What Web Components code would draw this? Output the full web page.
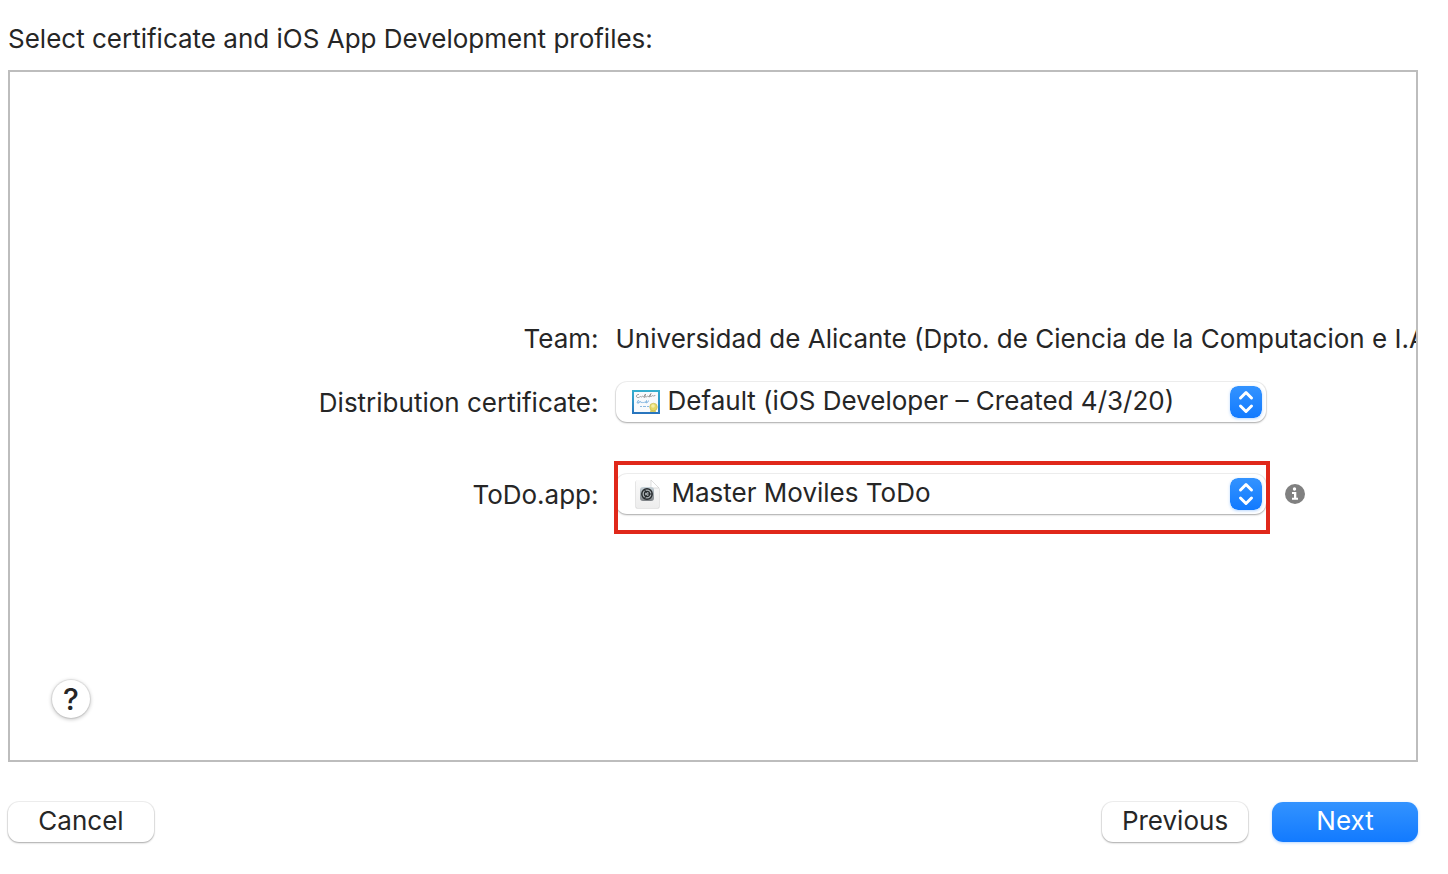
<!DOCTYPE html>
<html lang="en">
<head>
<meta charset="utf-8">
<title>Select certificate and profiles</title>
<style>
  body { margin: 0; background: #fff; color: #262626; font: 26px/32px Inter, "Liberation Sans", sans-serif; }
</style>
</head>
<body>
<signing-sheet>
  <team-row label="Team:">Universidad de Alicante (Dpto. de Ciencia de la Computacion e I.A.</team-row>
  <popup-row label="Distribution certificate:" value="Default (iOS Developer – Created 4/3/20)" icon="certificate"></popup-row>
  <popup-row label="ToDo.app:" value="Master Moviles ToDo" icon="profile" marked info></popup-row>
  <help-button slot="help"></help-button>
  <push-button slot="cancel">Cancel</push-button>
  <push-button slot="actions">Previous</push-button>
  <push-button slot="actions" primary>Next</push-button>
</signing-sheet>

<script>
const rowStyle = `
  :host { display: grid; grid-template-columns: 42% minmax(0, 1fr); column-gap: 15px; align-items: center; }
  .label { text-align: right; padding-right: 2px; white-space: nowrap; }
`;

class SigningSheet extends HTMLElement {
  constructor() {
    super();
    this.attachShadow({ mode: "open" }).innerHTML = `
      <style>
        :host { display: flex; flex-direction: column; box-sizing: border-box; min-height: 100vh; padding: 23px 30px 32px 8px; }
        h1 { margin: 0 0 15px; font: inherit; }
        .panel { flex: 1; display: flex; flex-direction: column; border: 2px solid #bdbdbd; overflow: hidden; }
        .rows { flex: 1; display: flex; flex-direction: column; justify-content: center; padding-top: 85px; }
        .help { padding: 0 0 42px 42px; }
        footer { display: flex; justify-content: space-between; margin-top: 40px; }
        .actions { display: flex; gap: 24px; }
      </style>
      <h1>Select certificate and iOS App Development profiles:</h1>
      <main class="panel">
        <div class="rows"><slot></slot></div>
        <div class="help"><slot name="help"></slot></div>
      </main>
      <footer>
        <slot name="cancel"></slot>
        <div class="actions"><slot name="actions"></slot></div>
      </footer>`;
  }
}

class TeamRow extends HTMLElement {
  constructor() {
    super();
    this.attachShadow({ mode: "open" }).innerHTML = `
      <style>${rowStyle}
        :host { margin-bottom: 27px; }
        .value { white-space: nowrap; }
      </style>
      <span class="label">${this.getAttribute("label")}</span>
      <span class="value"><slot></slot></span>`;
  }
}

const icons = {
  certificate: `
    <svg class="icon" width="28" height="24" viewBox="0 0 28 24" aria-hidden="true">
      <defs><linearGradient id="frame" x2="0" y2="1"><stop stop-color="#35b0cf"/><stop offset="1" stop-color="#2873bd"/></linearGradient></defs>
      <rect width="28" height="24" fill="url(#frame)"/>
      <rect x="2" y="2" width="24" height="20" fill="#f8fafc"/>
      <path d="M7 4.500C4.500 4 3.500 7 5.500 7.500S8 6 8.500 6.500s.5 1 1.500 0 1 1 2 0l1.500-2.500-1 3.500c1-1.500 1.500 0 2.500-1s1 .5 2 0l2-3-1.500 3.500c1.500-1.500 1.500 0 2.500-1s1 .5 1.500 0 1.500 0 2-1" fill="none" stroke="#777" stroke-width=".7"/>
      <path d="M5 13l1-2.500c2 0 1.500 2.500-.5 2.500 3 0 2-1.500 3-1.500s0 2 1 1 1 1 2 0 1 .5 2 0l1-2-.5 2.500 2-1 .5-1.500M8 16.500h2m1 0h3m1 0h2" fill="none" stroke="#6fa9da" stroke-width=".8"/>
      <path d="M19 18l-1 4h6l-1-4z" fill="#d7cc60"/>
      <circle cx="21.500" cy="17" r="3.800" fill="#e5d967" stroke="#c4b750" stroke-width=".6"/>
      <circle cx="21" cy="16" r="1.800" fill="#f5eea5"/>
    </svg>`,
  profile: `
    <svg class="icon" width="32" height="32" viewBox="0 0 32 32" aria-hidden="true">
      <defs>
        <linearGradient id="sheet" x2="0" y2="1"><stop stop-color="#fafafa"/><stop offset="1" stop-color="#ededed"/></linearGradient>
        <linearGradient id="tile" x2="0" y2="1"><stop stop-color="#c7d2d8"/><stop offset="1" stop-color="#7d8185"/></linearGradient>
      </defs>
      <path d="M5 2.500h14l8.500 8v18.500q0 1.500-1.500 1.500H5q-1.500 0-1.500-1.500V4q0-1.500 1.500-1.500z" fill="#ccc"/>
      <path d="M5 2h14l8 8v18.500q0 1.500-1.500 1.500H5.500q-1.500 0-1.500-1.500V3.500q0-1.500 1-1.500z" fill="url(#sheet)"/>
      <path d="M19 2v6.500q0 1.500 1.500 1.500H27z" fill="#fff" stroke="#c9c9c9" stroke-width=".6"/>
      <rect x="8" y="9" width="14" height="14" rx="3" fill="url(#tile)"/>
      <circle cx="15" cy="16" r="5.200" fill="#aab0b3" stroke="#25292c" stroke-width="1.400"/>
      <circle cx="15" cy="16" r="2.600" fill="none" stroke="#25292c" stroke-width="1.100"/>
      <path d="M15.500 16H20M14.500 15l-2-3.500M14.500 17l-2 3.500" stroke="#25292c" stroke-width="1.100"/>
    </svg>`
};

class PopupRow extends HTMLElement {
  constructor() {
    super();
    const icon = this.getAttribute("icon");
    this.attachShadow({ mode: "open" }).innerHTML = `
      <style>${rowStyle}
        :host { margin-bottom: 52px; }
        :host(:last-of-type) { margin-bottom: 0; }
        .label { padding-top: 2px; }
        .field { display: flex; align-items: center; gap: 18px; }
        .popup { position: relative; flex: 0 1 650px; min-width: 0; }
        select {
          display: block; appearance: none; box-sizing: border-box; width: 100%; height: 40px; margin: 0;
          padding: 0 44px 2px 52px; border: 0; border-radius: 11px; background: #fff;
          color: inherit; font: inherit; text-overflow: ellipsis;
          box-shadow: 0 0 0 1px rgba(0,0,0,.06), 0 1px 2px rgba(0,0,0,.3);
        }
        :host([icon="profile"]) select { padding-left: 56px; }
        .icon, .arrows { position: absolute; top: 0; bottom: 0; margin: auto 0; pointer-events: none; }
        .icon { left: 16px; }
        .arrows { right: 4px; border-radius: 8px; box-shadow: 0 1px 3px rgba(20,122,255,.3); }
        .mark { position: absolute; inset: -13px -4px -20px -2px; border: 4px solid #e0281a; pointer-events: none; }
        .info { display: block; flex: none; }
      </style>
      <label class="label" for="choice">${this.getAttribute("label")}</label>
      <div class="field">
        <div class="popup">
          <select id="choice"><option>${this.getAttribute("value")}</option></select>
          ${icons[icon]}
          <svg class="arrows" width="32" height="32" viewBox="0 0 32 32" aria-hidden="true">
            <defs><linearGradient id="blue" x2="0" y2="1"><stop stop-color="#3393ff"/><stop offset="1" stop-color="#127aff"/></linearGradient></defs>
            <rect width="32" height="32" rx="8" fill="url(#blue)"/>
            <path d="M10.500 12L16 6.500l5.500 5.500M10.500 20L16 25.500l5.500-5.500" fill="none" stroke="#fff" stroke-width="3" stroke-linecap="round" stroke-linejoin="round"/>
          </svg>
          ${this.hasAttribute("marked") ? '<div class="mark"></div>' : ""}
        </div>
        ${this.hasAttribute("info") ? `
          <svg class="info" width="22" height="22" viewBox="0 0 22 22" role="img" aria-label="Information">
            <circle cx="11" cy="11" r="10" fill="#808080"/>
            <circle cx="10.500" cy="6" r="1.700" fill="#fff"/>
            <path d="M8 9h4.300v5.800H14v2H8v-2h2V11H8z" fill="#fff"/>
          </svg>` : ""}
      </div>`;
  }
}

class HelpButton extends HTMLElement {
  constructor() {
    super();
    this.attachShadow({ mode: "open" }).innerHTML = `
      <style>
        :host { display: block; }
        button {
          display: block; width: 38px; height: 38px; margin: 0; padding: 0; border: 0; border-radius: 50%;
          background: #fff; color: inherit; font: inherit; font-size: 30px; font-weight: 500;
          box-shadow: 0 0 0 1px rgba(0,0,0,.06), 0 1px 4px rgba(0,0,0,.3);
        }
      </style>
      <button type="button" aria-label="Help">?</button>`;
  }
}

class PushButton extends HTMLElement {
  constructor() {
    super();
    this.attachShadow({ mode: "open" }).innerHTML = `
      <style>
        :host { display: block; }
        button {
          display: block; width: 146px; height: 40px; margin: 0; padding: 0 0 2px; border: 0; border-radius: 11px;
          background: #fff; color: inherit; font: inherit;
          box-shadow: 0 0 0 1px rgba(0,0,0,.06), 0 1px 2px rgba(0,0,0,.3);
        }
        :host([primary]) button {
          background: linear-gradient(#3393ff, #127aff); color: #fff;
          box-shadow: 0 1px 3px rgba(20,122,255,.3);
        }
      </style>
      <button type="button"><slot></slot></button>`;
  }
}

customElements.define("team-row", TeamRow);
customElements.define("popup-row", PopupRow);
customElements.define("help-button", HelpButton);
customElements.define("push-button", PushButton);
customElements.define("signing-sheet", SigningSheet);
</script>
</body>
</html>
